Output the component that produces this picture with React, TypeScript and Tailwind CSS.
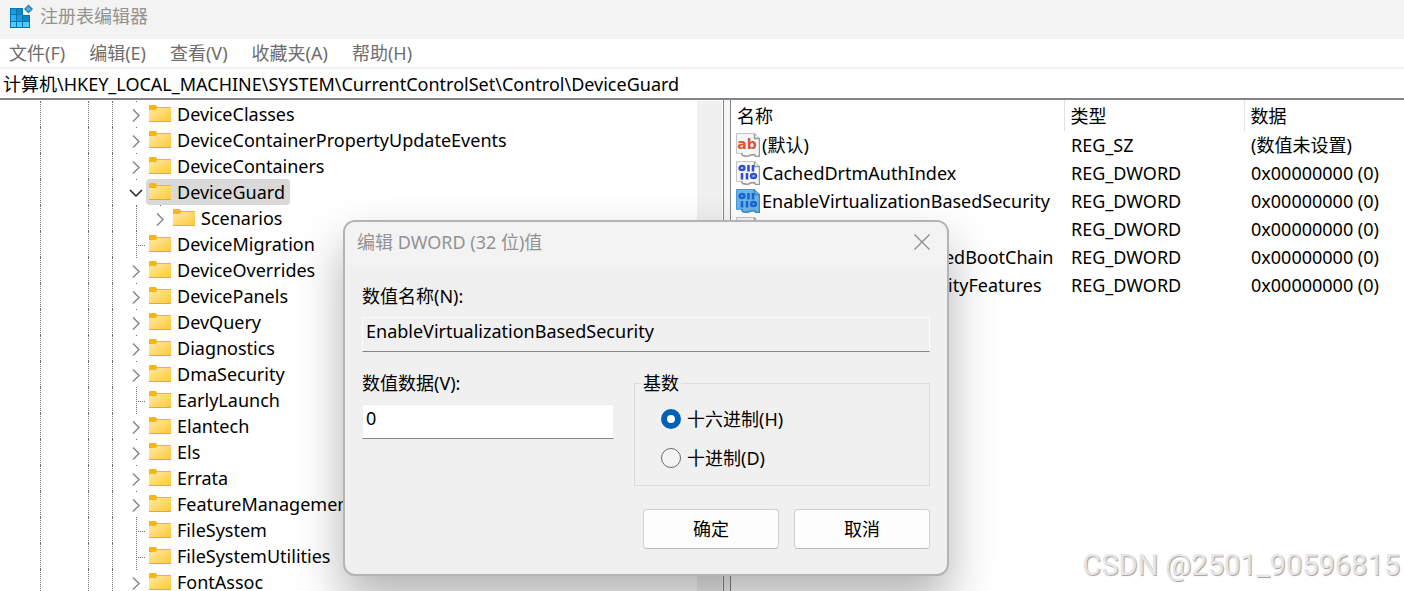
import { useState } from "react";
import type { FunctionComponent } from "react";

type NodeState = "closed" | "open" | "leaf";

interface TreeNode {
  name: string;
  state: NodeState;
  child?: boolean;
}

interface RegValue {
  name: string;
  type: string;
  data: string;
  selected?: boolean;
}

const MENU = ["文件(F)", "编辑(E)", "查看(V)", "收藏夹(A)", "帮助(H)"];

const TREE: TreeNode[] = [
  { name: "DeviceClasses", state: "closed" },
  { name: "DeviceContainerPropertyUpdateEvents", state: "closed" },
  { name: "DeviceContainers", state: "closed" },
  { name: "DeviceGuard", state: "open" },
  { name: "Scenarios", state: "closed", child: true },
  { name: "DeviceMigration", state: "leaf" },
  { name: "DeviceOverrides", state: "closed" },
  { name: "DevicePanels", state: "closed" },
  { name: "DevQuery", state: "closed" },
  { name: "Diagnostics", state: "closed" },
  { name: "DmaSecurity", state: "closed" },
  { name: "EarlyLaunch", state: "leaf" },
  { name: "Elantech", state: "closed" },
  { name: "Els", state: "closed" },
  { name: "Errata", state: "closed" },
  { name: "FeatureManagement", state: "closed" },
  { name: "FileSystem", state: "leaf" },
  { name: "FileSystemUtilities", state: "leaf" },
  { name: "FontAssoc", state: "closed" },
];

const VALUES: RegValue[] = [
  { name: "(默认)", type: "REG_SZ", data: "(数值未设置)" },
  { name: "CachedDrtmAuthIndex", type: "REG_DWORD", data: "0x00000000 (0)" },
  { name: "EnableVirtualizationBasedSecurity", type: "REG_DWORD", data: "0x00000000 (0)", selected: true },
  { name: "Locked", type: "REG_DWORD", data: "0x00000000 (0)" },
  { name: "RequireMicrosoftSignedBootChain", type: "REG_DWORD", data: "0x00000000 (0)" },
  { name: "RequirePlatformSecurityFeatures", type: "REG_DWORD", data: "0x00000000 (0)" },
];

const RegeditIcon: FunctionComponent = () => (
  <svg className="h-6 w-6 shrink-0" viewBox="0 0 24 24" aria-hidden="true">
    <path d="M1 4h13v7h7v13H1z" fill="#0a74b0" />
    <rect x="2" y="5" width="5" height="5" fill="#1b9bdc" />
    <rect x="8" y="5" width="5" height="5" fill="#1287c8" />
    <rect x="2" y="11" width="5" height="6" fill="#2bb2ee" />
    <rect x="8" y="11" width="5" height="6" fill="#1a9bdc" />
    <rect x="14" y="12" width="6" height="5" fill="#0f84c4" />
    <rect x="2" y="18" width="5" height="5" fill="#4fcbfa" />
    <rect x="8" y="18" width="5" height="5" fill="#4fcbfa" />
    <rect x="14" y="18" width="6" height="5" fill="#4fcbfa" />
    <path d="M19.500 0.500l4.500 4.500-4.500 4.500-4.500-4.500z" fill="#2c86b6" />
    <path d="M19.500 2.800l2.200 2.200-2.200 2.200-2.200-2.200z" fill="#62b4da" />
  </svg>
);

const FolderIcon: FunctionComponent = () => (
  <svg className="h-[18px] w-[22px] shrink-0" viewBox="0 0 22 18" aria-hidden="true">
    <defs>
      <linearGradient id="folder" x1="0" y1="0" x2="1" y2="1">
        <stop offset="0" stopColor="#ffe9a6" />
        <stop offset="1" stopColor="#ffc936" />
      </linearGradient>
    </defs>
    <path d="M0 1q0-1 1-1h6l1 2h14v3H0z" fill="#f7b51c" />
    <path d="M0 5h7l1-2h14v14H0z" fill="url(#folder)" />
    <path d="M0 16.500h22" stroke="#e9a92a" />
  </svg>
);

const Branch: FunctionComponent<{ state: NodeState }> = ({ state }) => (
  <svg className="h-[26px] w-[22px] shrink-0" viewBox="0 0 22 26" fill="none" aria-hidden="true">
    {state === "leaf" ? (
      <path d="M12.500 0v26M14 14.500h9" stroke="#707070" strokeDasharray="1 1" />
    ) : (
      <path d="M12.500 0v1" stroke="#707070" />
    )}
    {state === "closed" && <path d="M9 8.500l6 6-6 6" stroke="#8a8a8a" strokeWidth="1.500" />}
    {state === "open" && <path d="M6 11l6 6 6-6" stroke="#222222" strokeWidth="1.500" />}
  </svg>
);

const ValueIcon: FunctionComponent<{ text?: boolean; selected?: boolean }> = ({ text, selected }) => (
  <svg className="h-6 w-6 shrink-0" viewBox="0 0 24 24" fill="none" aria-hidden="true">
    <path
      d="M.5.5h18l5 5v18h-4l-1-2-4 .5-3 1.500-5-1-1-2.500-5 .5z"
      fill={selected ? "#6db2e8" : "#f7f7f9"}
      stroke={selected ? "#4a96d3" : "#c4c4c4"}
    />
    <path
      d="M18.500.5v5h5M23.500 5v18.500h-4l-1-2-4 .5-3 1.500-5-1-1-2.500"
      stroke={selected ? "#3d88c4" : "#999999"}
      strokeWidth="1.500"
    />
    {text ? (
      <text
        x="11"
        y="16"
        textAnchor="middle"
        fill="#dd5531"
        className="font-['DejaVu_Sans',sans-serif] text-[14px] font-bold"
      >
        ab
      </text>
    ) : (
      <g stroke={selected ? "#1668cf" : "#3350d4"} strokeWidth="2.400">
        <ellipse cx="6" cy="7" rx="2.500" ry="2" />
        <path d="M12.500 4v6.500M17 4v6.500M6 12v6.500M11 12v6.500" strokeWidth="2.600" />
        <ellipse cx="17.500" cy="15" rx="2.500" ry="2" />
      </g>
    )}
  </svg>
);

const KeyTree: FunctionComponent = () => (
  <ul className="min-w-0 flex-1 overflow-hidden pt-px">
    {TREE.map((node) => (
      <li key={node.name} className="flex h-[26px] whitespace-nowrap">
        <span className="w-10 shrink-0" />
        <span className="w-12 shrink-0 border-l border-dotted border-[#707070]" />
        <span className="w-6 shrink-0 border-l border-dotted border-[#707070]" />
        <span className="w-3 shrink-0 border-l border-dotted border-[#707070]" />
        {node.child && (
          <>
            <span className="w-3 shrink-0" />
            <span className="w-3 shrink-0 border-l border-dotted border-[#707070]" />
          </>
        )}
        <Branch state={node.state} />
        <span
          className={`flex items-center gap-[6px] rounded-sm pr-[5px] pl-[3px] ${node.state === "open" ? "bg-[#d9d9d9]" : ""}`}
        >
          <FolderIcon />
          {node.name}
        </span>
      </li>
    ))}
  </ul>
);

const ValueTable: FunctionComponent = () => (
  <table className="w-full table-fixed border-collapse text-left whitespace-nowrap">
    <thead>
      <tr className="h-[31px]">
        <th className="w-[333px] p-0 pl-[6px] font-normal">名称</th>
        <th className="w-[180px] border-l border-[#e2e2e2] p-0 pl-[6px] font-normal">类型</th>
        <th className="border-l border-[#e2e2e2] p-0 pl-[6px] font-normal">数据</th>
      </tr>
    </thead>
    <tbody>
      {VALUES.map((value) => (
        <tr key={value.name} className="h-7">
          <td className="p-0 pl-[5px]">
            <span className="flex items-center gap-[2px]">
              <ValueIcon text={value.type === "REG_SZ"} selected={value.selected} />
              {value.name}
            </span>
          </td>
          <td className="p-0 pl-[7px]">{value.type}</td>
          <td className="p-0 pl-[7px]">{value.data}</td>
        </tr>
      ))}
    </tbody>
  </table>
);

const FIELD = "mt-2 block h-[35px] w-full border border-b-[#868686] px-[3px] pb-2 outline-none";
const RADIO =
  "h-5 w-5 appearance-none rounded-full border border-[#6a6a6a] bg-[#f3f3f3] checked:border-[6px] checked:border-[#005fb8] checked:bg-white";
const BUTTON = "h-10 w-[136px] rounded border border-[#d0d0d0] border-b-[#bcbcbc] bg-[#fdfdfd]";

const EditDialog: FunctionComponent = () => {
  const [data, setData] = useState("0");
  const [base, setBase] = useState("hex");

  return (
    <form
      role="dialog"
      aria-labelledby="dialog-title"
      className="absolute top-[220px] left-[343px] w-[606px] overflow-hidden rounded-xl border-2 border-[#b4b4b4] bg-[#f0f0f0] [box-shadow:0_24px_48px_rgba(0,0,0,0.3)]"
      onSubmit={(e) => e.preventDefault()}
    >
      <div className="flex h-[43px] items-center justify-between bg-[#f3f3f3] pr-[17px] pb-[3px] pl-3">
        <h2 id="dialog-title" className="text-[#929292]">
          编辑 DWORD (32 位)值
        </h2>
        <button type="button" aria-label="关闭">
          <svg className="h-4 w-4" viewBox="0 0 16 16" fill="none" stroke="#8c8c8c" strokeWidth="1.300">
            <path d="M.5.5l15 15M15.500.5l-15 15" />
          </svg>
        </button>
      </div>

      <div className="px-[17px] pt-[18px] pb-[25px]">
        <label htmlFor="value-name" className="block">
          数值名称(N):
        </label>
        <input
          id="value-name"
          readOnly
          value="EnableVirtualizationBasedSecurity"
          className={`${FIELD} border-[#fbfbfb] bg-[#f0f0f0]`}
        />

        <div className="mt-[18px] flex justify-between">
          <div className="w-[252px]">
            <label htmlFor="value-data" className="block">
              数值数据(V):
            </label>
            <input
              id="value-data"
              value={data}
              onChange={(e) => setData(e.target.value)}
              className={`${FIELD} border-[#ececec] bg-white`}
            />
          </div>
          <fieldset className="w-[296px] border border-[#dcdcdc] pb-[14px] pl-[26px]">
            <legend className="-ml-5 px-[2px]">基数</legend>
            <div className="flex flex-col gap-[13px] pt-[10px]">
              <label className="flex items-center gap-[6px]">
                <input
                  type="radio"
                  name="base"
                  checked={base === "hex"}
                  onChange={() => setBase("hex")}
                  className={RADIO}
                />
                十六进制(H)
              </label>
              <label className="flex items-center gap-[6px]">
                <input
                  type="radio"
                  name="base"
                  checked={base === "dec"}
                  onChange={() => setBase("dec")}
                  className={RADIO}
                />
                十进制(D)
              </label>
            </div>
          </fieldset>
        </div>

        <div className="mt-[23px] flex justify-end gap-[15px]">
          <button type="submit" className={BUTTON}>
            确定
          </button>
          <button type="button" className={BUTTON}>
            取消
          </button>
        </div>
      </div>
    </form>
  );
};

export default function App() {
  return (
    <div className="relative flex h-screen flex-col overflow-hidden bg-white font-['Noto_Sans','Noto_Sans_CJK_SC',sans-serif] text-[18px] leading-[26px] text-black">
      <header className="flex h-[39px] shrink-0 items-center gap-[7px] bg-[#f3f3f3] pb-2 pl-[9px]">
        <RegeditIcon />
        <h1 className="text-[#929292]">注册表编辑器</h1>
      </header>

      <nav className="flex h-[30px] shrink-0 items-center gap-6 border-b-2 border-[#f0f0f0] pl-[9px] text-[#6d6d6d]">
        {MENU.map((item) => (
          <button key={item} type="button">
            {item}
          </button>
        ))}
      </nav>

      <input
        aria-label="地址"
        defaultValue="计算机\HKEY_LOCAL_MACHINE\SYSTEM\CurrentControlSet\Control\DeviceGuard"
        className="h-[31px] shrink-0 border-b-2 border-[#82868c] pb-[2px] pl-[3px] outline-none"
      />

      <main className="flex min-h-0 flex-1">
        <section className="flex w-[724px] shrink-0 border-r border-[#82868c]">
          <KeyTree />
          <div className="mt-px mr-px w-[25px] bg-[#f0f0f0]" />
        </section>
        <div className="w-[6px] shrink-0 bg-[#f6f6f6]" />
        <section className="min-w-0 flex-1 border-l border-[#82868c]">
          <ValueTable />
        </section>
      </main>

      <EditDialog />

      <p className="absolute right-1 bottom-2 font-[Roboto,sans-serif] text-[29px] leading-9 text-[#e6e6e6] [text-shadow:1px_1px_1px_#a0a0a0]">
        CSDN @2501_90596815
      </p>
    </div>
  );
}
